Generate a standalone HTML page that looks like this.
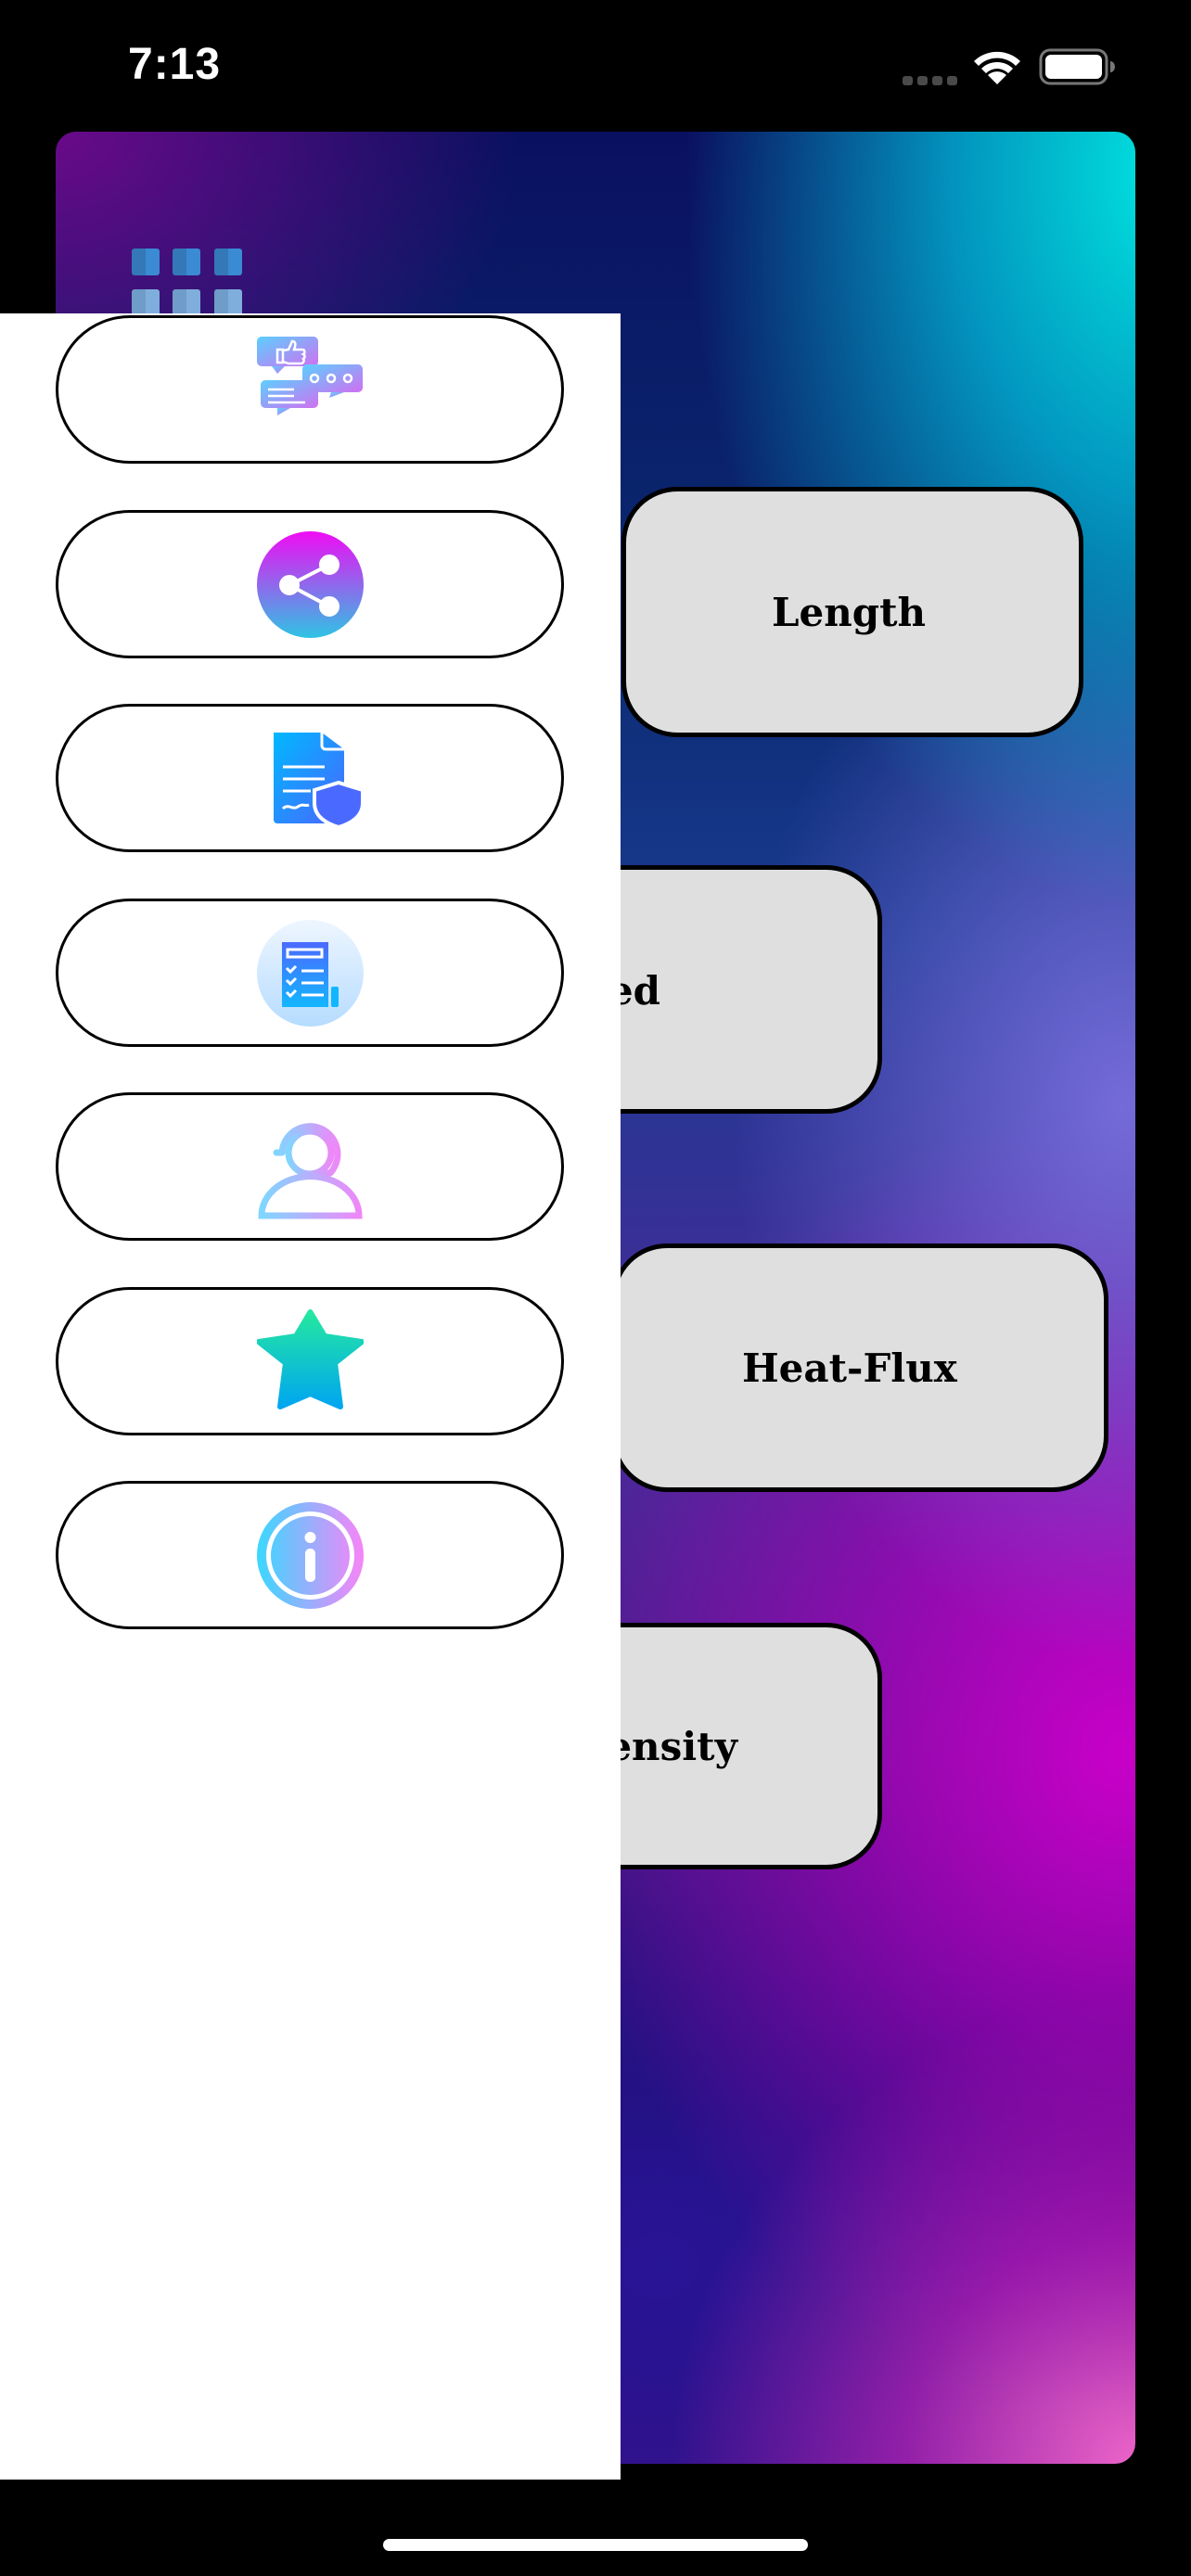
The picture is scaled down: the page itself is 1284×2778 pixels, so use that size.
<!DOCTYPE html>
<html><head><meta charset="utf-8"><style>
*{margin:0;padding:0;box-sizing:border-box}
body{width:1284px;height:2778px;background:#000;position:relative;overflow:hidden;font-family:"Liberation Sans",sans-serif}
.time{position:absolute;left:138px;top:42px;color:#fff;font-size:48px;font-weight:bold;letter-spacing:1px}
.card{position:absolute;left:60px;top:142px;width:1164px;height:2515px;border-radius:22px;overflow:hidden;
background:
radial-gradient(ellipse 520px 800px at 1200px 40px,#00e6e0 0%,rgba(0,190,220,.75) 45%,rgba(0,0,0,0) 100%),
radial-gradient(ellipse 420px 600px at 1150px 1050px,rgba(120,110,220,.95) 0%,rgba(100,100,210,0) 100%),
radial-gradient(ellipse 600px 700px at 1150px 1750px,rgba(200,0,200,1) 0%,rgba(180,0,190,.6) 50%,rgba(0,0,0,0) 100%),
radial-gradient(ellipse 500px 500px at 1164px 2515px,rgba(235,100,200,1) 0%,rgba(210,40,190,.6) 50%,rgba(0,0,0,0) 100%),
radial-gradient(ellipse 600px 500px at 650px 2300px,rgba(40,20,150,1) 0%,rgba(40,20,140,0) 100%),
radial-gradient(ellipse 500px 400px at 0px 0px,#6a0a8a 0%,rgba(80,10,120,0) 100%),
linear-gradient(180deg,#0a1060 0%,#0a2a70 20%,#1a3a90 35%,#4a2a9a 55%,#4a1a8a 70%,#1a0c66 85%,#3a1080 100%)}
.grid{position:absolute;width:30px;height:29px;border-radius:3px;background:linear-gradient(90deg,#3478b8 50%,#3a8ad4 50%)}
.grid.l{background:linear-gradient(90deg,#6f9cc8 50%,#80aedc 50%)}
.btn{position:absolute;background:#dfdfdf;border:5px solid #000;border-radius:60px}
.lbl{position:absolute;font-family:"DejaVu Serif",serif;font-weight:bold;font-size:42px;color:#000;line-height:1;white-space:nowrap}
.panel{position:absolute;left:0;top:338px;width:669px;height:2336px;background:#fff}
.pill{position:absolute;left:60px;width:548px;height:160px;border:3px solid #000;border-radius:80px;background:#fff;display:flex;align-items:center;justify-content:center}
.home{position:absolute;left:413px;top:2738px;width:458px;height:13px;border-radius:7px;background:#fff}
</style></head><body>
<div class="time">7:13</div>
<svg style="position:absolute;left:970px;top:50px" width="240" height="50" viewBox="0 0 240 50">
<g fill="#4a4a4a"><rect x="3" y="32" width="11" height="10" rx="3"/><rect x="19" y="32" width="11" height="10" rx="3"/><rect x="35" y="32" width="11" height="10" rx="3"/><rect x="51" y="32" width="11" height="10" rx="3"/></g>
<g fill="#fff"><path d="M105 41 L95 31 A15 15 0 0 1 115 31 Z"/><path d="M88 24 A24 24 0 0 1 122 24 L117 29 A17 17 0 0 0 93 29 Z"/><path d="M80 16 A36 36 0 0 1 130 16 L125 21 A28 28 0 0 0 85 21 Z"/></g>
<rect x="152" y="4" width="71" height="36" rx="10" fill="none" stroke="#777" stroke-width="3"/>
<rect x="157" y="9" width="61" height="26" rx="6" fill="#fff"/>
<path d="M227 16 a5 6 0 0 1 0 12z" fill="#777"/>
</svg>
<div class="card"></div>
<div class="grid" style="left:142px;top:268px"></div><div class="grid" style="left:186px;top:268px"></div><div class="grid" style="left:231px;top:268px"></div>
<div class="grid l" style="left:142px;top:312px"></div><div class="grid l" style="left:186px;top:312px"></div><div class="grid l" style="left:231px;top:312px"></div>
<div class="btn" style="left:670px;top:525px;width:498px;height:270px"></div>
<div class="lbl" style="left:832px;top:640px">Length</div>
<div class="btn" style="left:400px;top:933px;width:551px;height:268px"></div>
<div class="lbl" style="right:572px;top:1048px">Speed</div>
<div class="btn" style="left:659px;top:1341px;width:536px;height:268px"></div>
<div class="lbl" style="left:800px;top:1455px">Heat-Flux</div>
<div class="btn" style="left:400px;top:1750px;width:551px;height:266px"></div>
<div class="lbl" style="right:489px;top:1863px">Density</div>
<div class="panel"></div>
<div class="pill" style="top:340px"><svg width="115" height="115" viewBox="0 0 115 115"><defs><linearGradient id="g1" x1="0" y1="0" x2="1" y2="1"><stop offset="0" stop-color="#5ccfff"/><stop offset="1" stop-color="#d070f0"/></linearGradient></defs><g fill="url(#g1)"><rect x="0" y="0" width="66" height="32" rx="5"/><path d="M16 32h14l-8 8z"/><rect x="49" y="30" width="65" height="30" rx="5"/><path d="M80 60h14l-16 6z"/><rect x="4" y="47" width="62" height="30" rx="5"/><path d="M22 77h14l-14 8z"/></g><g fill="none" stroke="#fff" stroke-width="2.5"><circle cx="62" cy="45" r="4"/><circle cx="80" cy="45" r="4"/><circle cx="98" cy="45" r="4"/><path d="M12 57h28M12 64h28M12 71h40"/><path d="M22 14h6v14h-6zM28 15l6-1 4-9c3 0 4 2 3 6l-1 3h9c3 0 3 4 1 5 2 1 2 4 0 5 1 1 1 4-2 5h-14l-6-2"/></g></svg></div>
<div class="pill" style="top:550px"><svg width="115" height="115" viewBox="0 0 115 115"><defs><linearGradient id="g2" x1="0" y1="0" x2="0" y2="1"><stop offset="0" stop-color="#f00cf4"/><stop offset="1" stop-color="#2ec4e4"/></linearGradient></defs><circle cx="57.5" cy="57.5" r="57.5" fill="url(#g2)"/><g fill="#fff" stroke="#fff" stroke-width="4"><line x1="35" y1="58" x2="78" y2="36"/><line x1="35" y1="58" x2="78" y2="81"/><circle cx="35" cy="58" r="9"/><circle cx="78" cy="36" r="9"/><circle cx="78" cy="81" r="9"/></g></svg></div>
<div class="pill" style="top:759px"><svg width="115" height="115" viewBox="0 0 115 115"><defs><linearGradient id="g3" x1="0" y1="0" x2="1" y2="1"><stop offset="0" stop-color="#00b8ff"/><stop offset="1" stop-color="#4a66ff"/></linearGradient></defs><path d="M18 8h52l24 18v80h-72a4 4 0 0 1-4-4z" fill="url(#g3)"/><path d="M70 8v14a4 4 0 0 0 4 4h20" fill="none" stroke="#fff" stroke-width="3"/><path d="M62 70l26-8 26 8v14c0 14-12 22-26 26-14-4-26-12-26-26z" fill="#4a6aff" stroke="#fff" stroke-width="4"/><g stroke="#fff" stroke-width="3" fill="none"><path d="M28 45h45M28 58h45M28 71h30M28 90c6-6 10 2 16-2s8 0 12-2"/></g></svg></div>
<div class="pill" style="top:969px"><svg width="115" height="115" viewBox="0 0 115 115"><defs><linearGradient id="g4" x1="0" y1="0" x2="0" y2="1"><stop offset="0" stop-color="#eef6ff"/><stop offset="1" stop-color="#b6dcff"/></linearGradient><linearGradient id="g5" x1="0" y1="0" x2="0" y2="1"><stop offset="0" stop-color="#4a6aff"/><stop offset="1" stop-color="#12b6ff"/></linearGradient></defs><circle cx="57.5" cy="57.5" r="57.5" fill="url(#g4)"/><rect x="27" y="24" width="50" height="70" fill="url(#g5)"/><rect x="80" y="72" width="8" height="22" rx="2" fill="#12b6ff"/><g stroke="#fff" stroke-width="3" fill="none"><rect x="33" y="32" width="37" height="8"/><path d="M32 52l4 4 6-6M32 65l4 4 6-6M32 78l4 4 6-6M48 55h24M48 68h24M48 81h24"/></g></svg></div>
<div class="pill" style="top:1178px"><svg width="115" height="115" viewBox="0 0 115 115"><defs><linearGradient id="g6" x1="0" y1="0" x2="1" y2="0"><stop offset="0" stop-color="#80d6ff"/><stop offset="1" stop-color="#ee88f8"/></linearGradient></defs><g fill="none" stroke="url(#g6)" stroke-width="7" stroke-linecap="round"><circle cx="57" cy="42" r="23"/><path d="M27 42a30 30 0 1 1 52 22 M27 42h-6M78 64l-18 2"/><path d="M5 110a52 42 0 0 1 105 0z"/></g></svg></div>
<div class="pill" style="top:1388px"><svg width="115" height="115" viewBox="0 0 115 115"><defs><linearGradient id="g7" x1="0" y1="0" x2="0" y2="1"><stop offset="0" stop-color="#24e8a0"/><stop offset="1" stop-color="#00a6f0"/></linearGradient></defs><path d="M57.5 4 L73 30 L113 36 L84 59 L90 106 L57.5 92 L25 106 L31 59 L2 36 L42 30 Z" fill="url(#g7)" stroke="url(#g7)" stroke-width="6" stroke-linejoin="round"/></svg></div>
<div class="pill" style="top:1597px"><svg width="115" height="115" viewBox="0 0 115 115"><defs><linearGradient id="g8" x1="0" y1="0" x2="1" y2="0"><stop offset="0" stop-color="#3ad8ff"/><stop offset="1" stop-color="#f884f8"/></linearGradient></defs><circle cx="57.5" cy="57.5" r="57.5" fill="url(#g8)"/><circle cx="57.5" cy="57.5" r="45" fill="none" stroke="#fff" stroke-width="5"/><g fill="#fff"><circle cx="57.5" cy="38" r="6"/><rect x="52" y="50" width="11" height="36" rx="5"/></g></svg></div>
<div class="home"></div>
</body></html>
